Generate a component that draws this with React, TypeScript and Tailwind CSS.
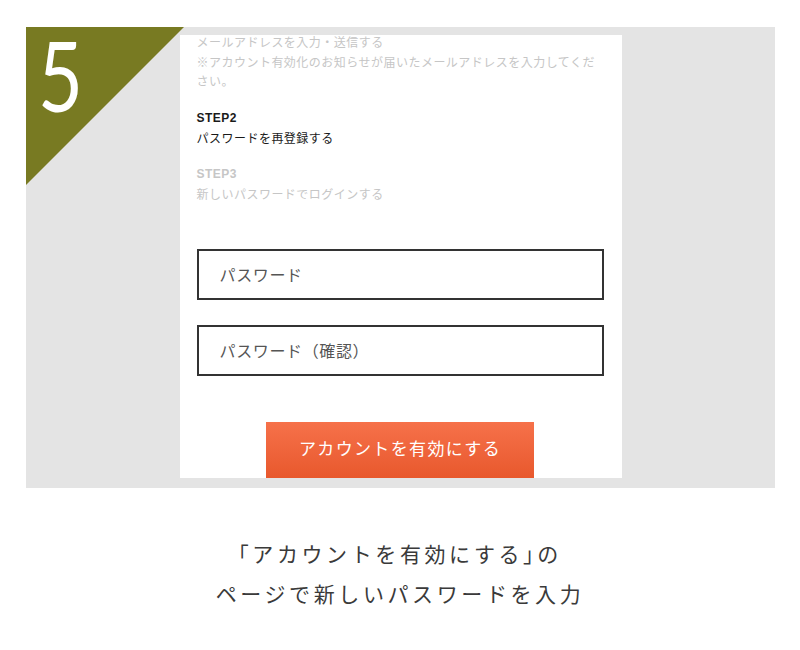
import React from "react";

const jp = "font-['Noto_Sans_CJK_JP','Noto_Sans',sans-serif]";

export default function App() {
  return (
    <div className={`w-[800px] h-[650px] bg-white pt-[27px] ${jp}`}>
      <div className="relative ml-[26px] w-[749px] h-[461px] bg-[#e4e4e4] flex justify-center pt-[8px]">
        <div className="absolute left-0 top-0 w-[158px] h-[158px] bg-[#787a22] [clip-path:polygon(0_0,100%_0,0_100%)]" />
        <div className="absolute left-[12px] top-[-2px] text-white text-[97px] leading-[100px] font-normal font-['Lato',sans-serif] scale-x-[0.8] origin-left">
          5
        </div>
        <div className="w-[442px] h-[443px] bg-white pl-[17px] pr-[18px]">
          <div className="-mt-[3px] text-[12px] leading-[19.5px] tracking-[0.04em]">
            <p className="text-[#c6c6c6]">
              メールアドレスを入力・送信する
              <br />
              ※アカウント有効化のお知らせが届いたメールアドレスを入力してください。
            </p>
            <p className="mt-[16px] text-[#1a1a1a] leading-[19px]">
              <span className="font-bold font-['Liberation_Sans',sans-serif]">STEP2</span>
              <br />
              パスワードを再登録する
            </p>
            <p className="mt-[16px] text-[#c6c6c6] leading-[19px]">
              <span className="font-bold font-['Liberation_Sans',sans-serif]">STEP3</span>
              <br />
              新しいパスワードでログインする
            </p>
          </div>
          <div className="mt-[46px] flex flex-col gap-[25px]">
            <div className="h-[51px] border-2 border-[#333] flex items-center pl-[21px] text-[16px] text-[#555] tracking-[0.04em]">
              パスワード
            </div>
            <div className="h-[51px] border-2 border-[#333] flex items-center pl-[21px] text-[16px] text-[#555] tracking-[0.04em]">
              パスワード（確認）
            </div>
          </div>
          <div className="mt-[46px] flex justify-center">
            <div className="w-[268px] h-[56px] bg-gradient-to-b from-[#f6714a] to-[#e8582c] flex items-center justify-center pb-[3px] text-white text-[17px] tracking-[0.08em]">
              アカウントを有効にする
            </div>
          </div>
        </div>
      </div>
      <div className="mt-[45px] text-center text-[#3a3a3a] text-[21px] leading-[40px] tracking-[3.6px]">
        <p>
          <span className="[font-feature-settings:'halt']">「</span>アカウントを有効にする<span className="[font-feature-settings:'halt']">」</span>の
        </p>
        <p>ページで新しいパスワードを入力</p>
      </div>
    </div>
  );
}
